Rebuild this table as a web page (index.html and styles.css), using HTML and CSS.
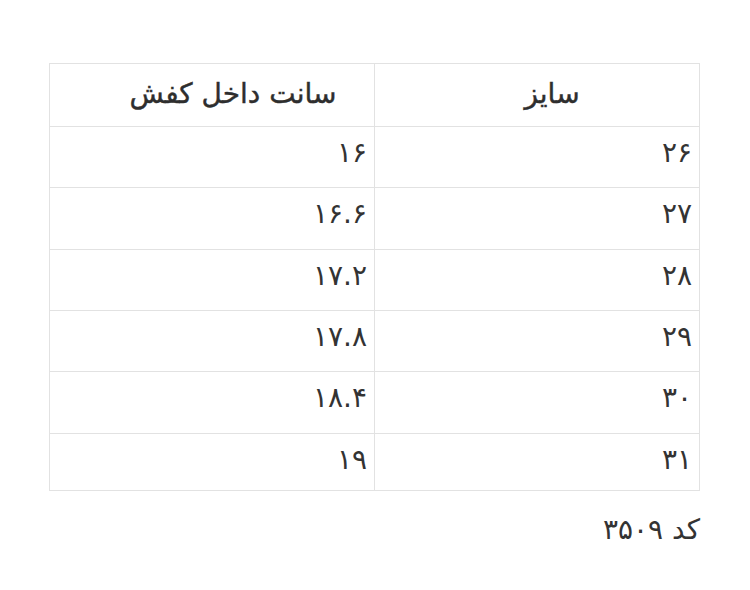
FILE: index.html
```html
<!DOCTYPE html>
<html lang="fa" dir="rtl">
<head>
<meta charset="utf-8">
<link rel="stylesheet" href="styles.css">
</head>
<body>
<div class="wrap">
<table class="sizes">
<colgroup><col class="c"><col class="c"></colgroup>
<thead>
<tr><th class="h-size">سایز</th><th class="h-cm">سانت داخل کفش</th></tr>
</thead>
<tbody>
<tr><td>۲۶</td><td>۱۶</td></tr>
<tr><td>۲۷</td><td>۱۶.۶</td></tr>
<tr><td>۲۸</td><td>۱۷.۲</td></tr>
<tr><td>۲۹</td><td>۱۷.۸</td></tr>
<tr><td>۳۰</td><td>۱۸.۴</td></tr>
<tr class="last"><td>۳۱</td><td>۱۹</td></tr>
</tbody>
</table>
<p class="code">کد ۳۵۰۹</p>
</div>
</body>
</html>
```
FILE: styles.css
```css
html, body {
  margin: 0;
  padding: 0;
  background: #fff;
}
body {
  font-family: "DejaVu Sans", sans-serif;
  color: #333;
}
.wrap {
  padding: 63px 50px 0 51px;
}
.sizes {
  width: 650px;
  border-collapse: collapse;
  table-layout: fixed;
}
.sizes col.c {
  width: 325px;
}
.sizes th, .sizes td {
  box-sizing: border-box;
  border: 1px solid #e2e2e2;
  font-weight: normal;
  line-height: 30px;
}
.sizes th {
  height: 63px;
  font-size: 28px;
  text-align: center;
  padding: 0 0 3px 0;
  color: #2e2e2e;
  -webkit-text-stroke: 0.4px #2e2e2e;
}
.sizes th.h-size {
  padding-left: 30px;
}
.sizes th.h-cm {
  padding-left: 42px;
}
.sizes td {
  height: 61.33px;
  font-size: 28px;
  text-align: right;
  padding: 0 7px 8px 7px;
}
.sizes tr.last td {
  height: 57.5px;
  padding-bottom: 4px;
}
.code {
  margin: 22px 0 0 0;
  font-size: 28px;
  line-height: 34px;
  text-align: right;
}
```
